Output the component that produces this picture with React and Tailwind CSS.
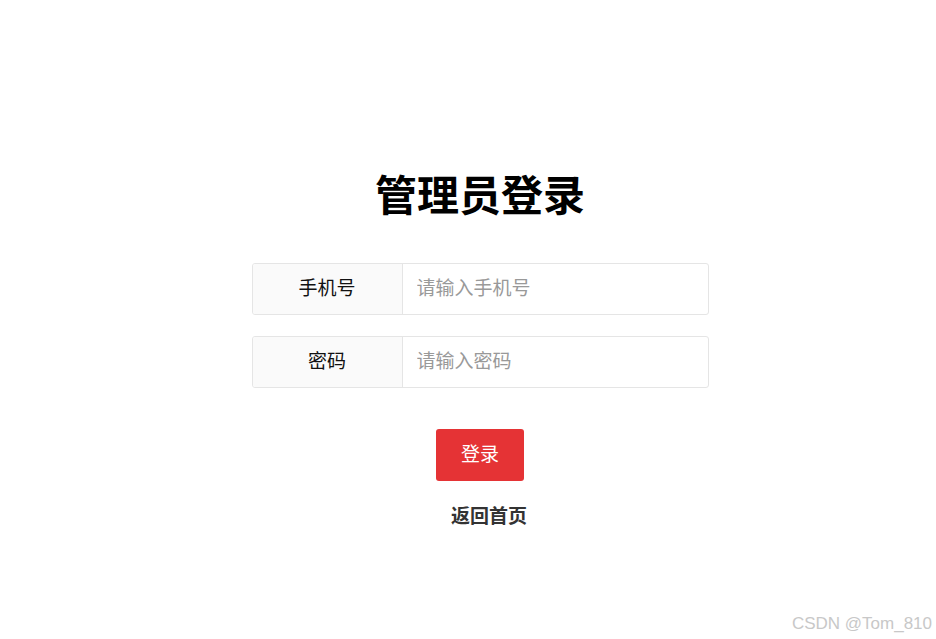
import React from 'react';

export default function App() {
  return (
    <div className="relative min-h-[639px] w-full bg-white font-['Liberation_Sans','Noto_Sans_CJK_SC',sans-serif]">
      <main className="flex flex-col items-center pl-[24px] pt-[168px]">
        {/* Title */}
        <h1 className="h-[58px] text-[42px] font-bold leading-[58px] text-black">管理员登录</h1>

        {/* Form rows */}
        <div className="mt-[37px] flex w-[457px] flex-col gap-[21px]">
          <div className="flex h-[52px] overflow-hidden rounded-[3px] border border-[#e5e5e5]">
            <div className="flex w-[150px] shrink-0 items-center justify-center border-r border-[#e5e5e5] bg-[#fafafa] text-[19px] text-[#111]">
              手机号
            </div>
            <input
              className="flex-1 px-[14px] text-[19px] text-[#333] outline-none placeholder:text-[#999]"
              placeholder="请输入手机号"
            />
          </div>
          <div className="flex h-[52px] overflow-hidden rounded-[3px] border border-[#e5e5e5]">
            <div className="flex w-[150px] shrink-0 items-center justify-center border-r border-[#e5e5e5] bg-[#fafafa] text-[19px] text-[#111]">
              密码
            </div>
            <input
              type="password"
              className="flex-1 px-[14px] text-[19px] text-[#333] outline-none placeholder:text-[#999]"
              placeholder="请输入密码"
            />
          </div>
        </div>

        {/* Submit */}
        <button className="mt-[41px] h-[52px] w-[88px] rounded-[3px] bg-[#e53335] text-[19px] text-white">
          登录
        </button>

        <a className="ml-[18px] mt-[22px] text-[19px] font-bold text-[#333]">返回首页</a>
      </main>

      <div className="absolute bottom-[3px] right-[4px] text-[17px] text-[#c8c8c8]">CSDN @Tom_810</div>
    </div>
  );
}
